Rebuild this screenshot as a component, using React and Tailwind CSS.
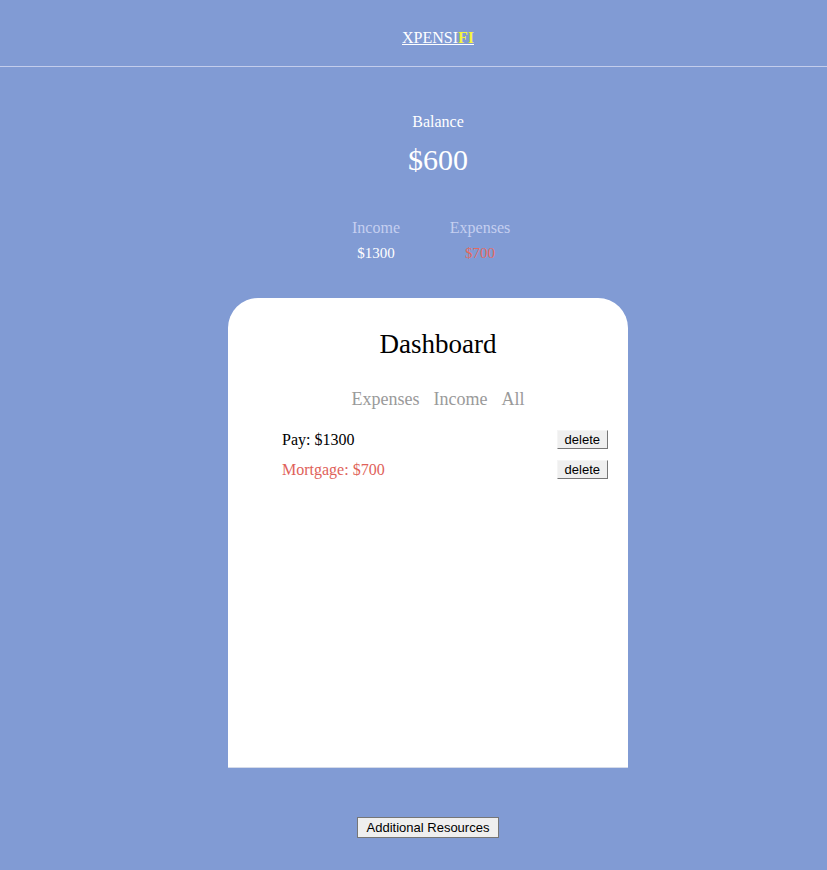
import React from "react";

const items = [
  { name: "Pay", amount: 1300, type: "income" },
  { name: "Mortgage", amount: 700, type: "expense" },
];

function App() {
  return (
    <div className="w-full min-h-[870px] bg-[#819bd4] font-['Liberation_Serif',serif] text-white">
      {/* Header */}
      <div className="h-[67px] border-b border-[#c3cdec] flex items-center justify-center pl-[49px] pt-[9px]">
        <a href="#" className="text-[16px] underline leading-none">
          XPENSI<span className="text-[#f5f53a] font-bold">FI</span>
        </a>
      </div>

      {/* Balance */}
      <div className="flex flex-col items-center pl-[49px] pt-[46px]">
        <div className="text-[16px] leading-[18px]">Balance</div>
        <div className="text-[30px] leading-[32px] mt-[13px]">$600</div>
      </div>

      <div className="flex justify-center gap-[50px] pl-[29px] mt-[40px]">
        <div className="flex flex-col items-center w-[54px]">
          <div className="text-[16px] text-[#c5cff0]">Income</div>
          <div className="text-[15px] mt-[2px]">$1300</div>
        </div>
        <div className="flex flex-col items-center w-[54px]">
          <div className="text-[16px] text-[#c5cff0]">Expenses</div>
          <div className="text-[15px] mt-[2px] text-[#e46a5f]">$700</div>
        </div>
      </div>

      {/* Dashboard card */}
      <div className="flex justify-center pl-[29px] mt-[33px]">
        <div className="w-[400px] h-[470px] bg-white rounded-t-[30px] border-b border-[#d5dbe9] text-black pt-[30px]">
          <h2 className="text-[27px] text-center pl-[20px] leading-[32px]">Dashboard</h2>
          <div className="flex justify-center gap-[14px] pl-[20px] mt-[26px] text-[18px] text-[#9a9a9a]">
            <span>Expenses</span>
            <span>Income</span>
            <span>All</span>
          </div>
          <ul className="mt-[17px] pl-[54px] pr-[20px] flex flex-col gap-[10px]">
            {items.map((it) => (
              <li
                key={it.name}
                className={`flex items-center justify-between text-[16px] h-[20px] ${
                  it.type === "expense" ? "text-[#e0625a]" : "text-black"
                }`}
              >
                <span>
                  {it.name}: ${it.amount}
                </span>
                <button className="font-['Liberation_Sans',sans-serif] text-[13px] text-black bg-[#efefef] border border-[#767676] border-t-[#f5f5f5] border-l-[#f5f5f5] px-[7px] h-[19px] leading-none">
                  delete
                </button>
              </li>
            ))}
          </ul>
        </div>
      </div>

      {/* Footer */}
      <div className="flex justify-center pl-[29px] pt-[49px] pb-[32px]">
        <button className="font-['Liberation_Sans',sans-serif] text-[13px] text-black bg-[#efefef] border border-[#767676] px-[9px] h-[21px] leading-none">
          Additional Resources
        </button>
      </div>
    </div>
  );
}

export default App;
